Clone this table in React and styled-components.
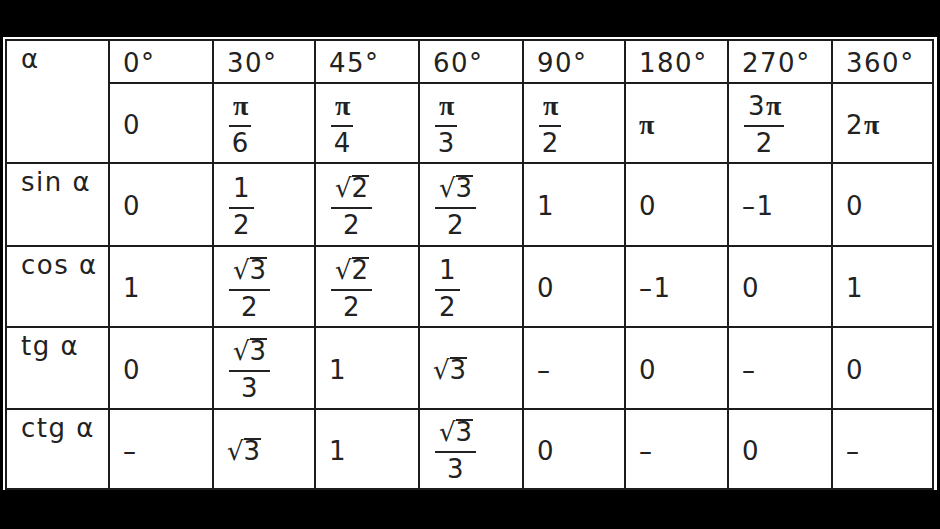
import React from "react";
import styled, { createGlobalStyle } from "styled-components";

const Global = createGlobalStyle`
  html, body { margin: 0; padding: 0; background: #000; }
  body { width: 940px; height: 529px; overflow: hidden; }
`;

const Frame = styled.div`
  display: inline-block;
  margin: 37px 0 0 3px;
  padding: 2px 3px 0 2px;
  background: #fff;
`;

const Grid = styled.div`
  display: grid;
  grid-template-columns: 101px 102px 100px 102px 102px 100px 101px 102px 99px;
  grid-template-rows: 41px 78px 81px 79px 80px 78px;
  gap: 2px;
  padding: 2px;
  background: #1c1c1c;
  font-family: "DejaVu Sans", "Liberation Sans", sans-serif;
  font-size: 26px;
  letter-spacing: 1.5px;
  color: #222;
`;

const Cell = styled.div`
  background: #fff;
  display: flex;
  align-items: ${(p) => (p.$top ? "flex-start" : "center")};
  padding: ${(p) => (p.$top ? "3px 0 0 14px" : "3px 0 0 13px")};
  grid-row: ${(p) => (p.$span ? `span ${p.$span}` : "auto")};
  line-height: 30px;
  white-space: nowrap;
`;

const Pi = styled.span`
  font-family: "Liberation Serif", "DejaVu Serif", serif;
  font-weight: bold;
  font-size: 28px;
  letter-spacing: 0;
`;

const Frac = styled.span`
  display: inline-flex;
  flex-direction: column;
  align-items: center;
  margin-left: 2px;
`;

const Num = styled.span`
  display: block;
  line-height: 26px;
  padding: 0 3px 0 4px;
  margin-bottom: 6px;
`;

const Bar = styled.span`
  display: block;
  align-self: stretch;
  height: 2px;
  background: #222;
`;

const Den = styled.span`
  display: block;
  line-height: 26px;
  margin-top: 3px;
  padding-left: 1px;
`;

const Root = styled.span`
  display: inline-flex;
  align-items: baseline;
`;

const Radical = styled.span`
  letter-spacing: 0;
  font-size: 26px;
`;

const Radicand = styled.span`
  display: inline-block;
  line-height: 20px;
  border-top: 2px solid #222;
  padding-top: 1px;
  letter-spacing: 0;
  padding-right: 1px;
`;

function Text({ v }) {
  const parts = v.split("π");
  return (
    <>
      {parts.map((p, i) => (
        <React.Fragment key={i}>
          {p}
          {i < parts.length - 1 && <Pi>π</Pi>}
        </React.Fragment>
      ))}
    </>
  );
}

function Val({ v }) {
  if (typeof v === "string") {
    if (v.startsWith("√")) {
      return (
        <Root>
          <Radical>√</Radical>
          <Radicand>{v.slice(1)}</Radicand>
        </Root>
      );
    }
    return <Text v={v} />;
  }
  return (
    <Frac>
      <Num>
        <Val v={v[0]} />
      </Num>
      <Bar />
      <Den>
        <Val v={v[1]} />
      </Den>
    </Frac>
  );
}

const degrees = ["0°", "30°", "45°", "60°", "90°", "180°", "270°", "360°"];
const radians = ["0", ["π", "6"], ["π", "4"], ["π", "3"], ["π", "2"], "π", ["3π", "2"], "2π"];

const rows = [
  ["sin α", ["0", ["1", "2"], ["√2", "2"], ["√3", "2"], "1", "0", "–1", "0"]],
  ["cos α", ["1", ["√3", "2"], ["√2", "2"], ["1", "2"], "0", "–1", "0", "1"]],
  ["tg α", ["0", ["√3", "3"], "1", "√3", "–", "0", "–", "0"]],
  ["ctg α", ["–", "√3", "1", ["√3", "3"], "0", "–", "0", "–"]],
];

export default function App() {
  return (
    <>
      <Global />
      <Frame>
        <Grid>
          <Cell $top $span={2}>α</Cell>
          {degrees.map((d) => (
            <Cell key={d}>{d}</Cell>
          ))}
          {radians.map((r, i) => (
            <Cell key={"r" + i}>
              <Val v={r} />
            </Cell>
          ))}
          {rows.map(([label, vals]) => (
            <React.Fragment key={label}>
              <Cell $top>{label}</Cell>
              {vals.map((v, i) => (
                <Cell key={i}>
                  <Val v={v} />
                </Cell>
              ))}
            </React.Fragment>
          ))}
        </Grid>
      </Frame>
    </>
  );
}
